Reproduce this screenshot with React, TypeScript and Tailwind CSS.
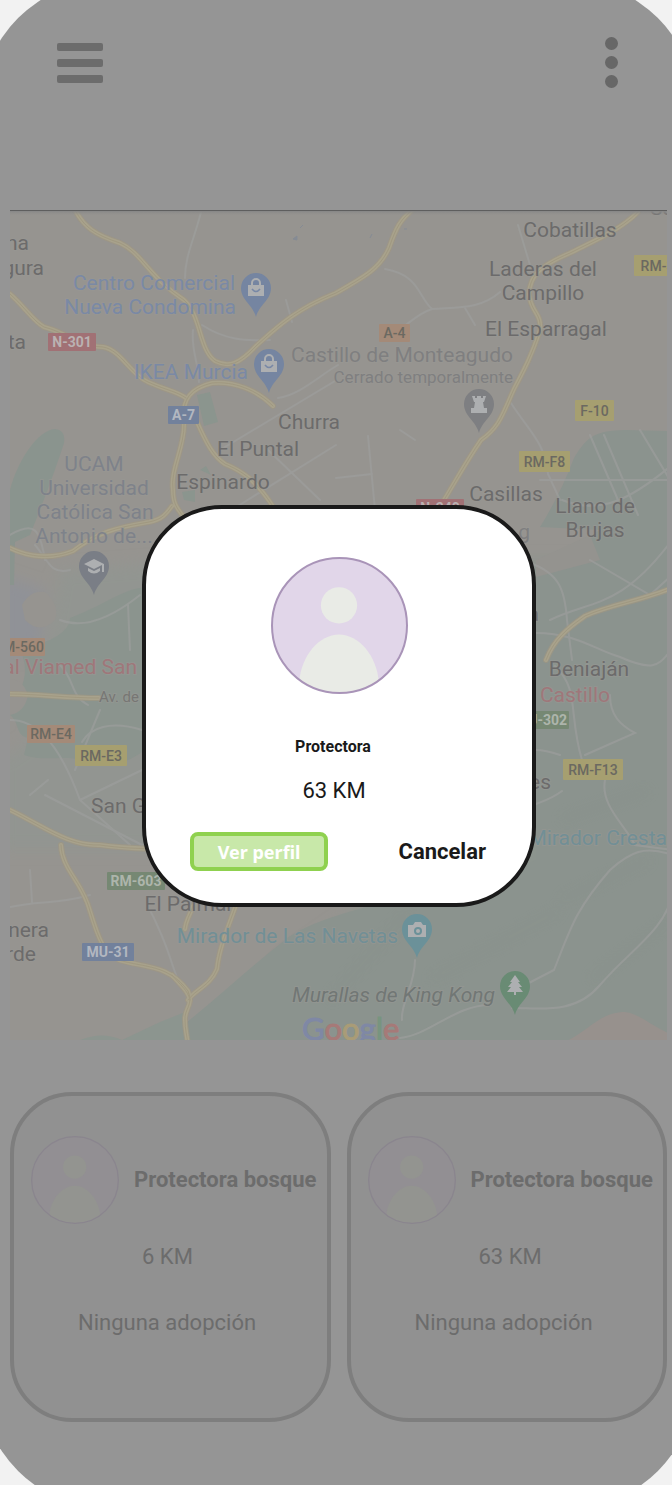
import React from "react";

type Label = { x: number; y: number; t: string; fill?: string; size?: number; italic?: boolean; end?: boolean; start?: boolean };

const DARK = "#6c6b6b";
const GREY = "#7f7f80";
const BLUE = "#7a89a5";
const SLATE = "#7e828a";
const TEAL = "#718f96";
const ROSE = "#9f777a";

const labels: Label[] = [
  { x: 570, y: 237, t: "Cobatillas" },
  { x: 543, y: 276, t: "Laderas del" },
  { x: 543, y: 300, t: "Campillo" },
  { x: 546, y: 336, t: "El Esparragal" },
  { x: 29, y: 250, t: "na", end: true },
  { x: 44, y: 275, t: "gura", end: true },
  { x: 26, y: 349, t: "ta", end: true },
  { x: 235, y: 290, t: "Centro Comercial", fill: BLUE, end: true },
  { x: 236, y: 314, t: "Nueva Condomina", fill: BLUE, end: true },
  { x: 248, y: 379, t: "IKEA Murcia", fill: BLUE, end: true },
  { x: 513, y: 362, t: "Castillo de Monteagudo", fill: GREY, end: true },
  { x: 513, y: 383, t: "Cerrado temporalmente", fill: GREY, size: 17, end: true },
  { x: 309, y: 429, t: "Churra" },
  { x: 258, y: 456, t: "El Puntal" },
  { x: 223, y: 489, t: "Espinardo" },
  { x: 94, y: 471, t: "UCAM", fill: SLATE },
  { x: 94, y: 495, t: "Universidad", fill: SLATE },
  { x: 95, y: 519, t: "Católica San", fill: SLATE },
  { x: 94, y: 543, t: "Antonio de...", fill: SLATE },
  { x: 506, y: 501, t: "Casillas" },
  { x: 595, y: 513, t: "Llano de" },
  { x: 595, y: 537, t: "Brujas" },
  { x: 530, y: 539, t: "g", fill: GREY, end: true },
  { x: 539, y: 621, t: "a", end: true },
  { x: 137, y: 674, t: "al Viamed San", fill: ROSE, end: true },
  { x: 99, y: 702, t: "Av. de", fill: "#777674", size: 15, start: true },
  { x: 589, y: 676, t: "Beniaján" },
  { x: 575, y: 702, t: "Castillo", fill: ROSE },
  { x: 551, y: 789, t: "es", end: true },
  { x: 91, y: 813, t: "San G", start: true },
  { x: 667, y: 845, t: "Mirador Cresta", fill: TEAL, end: true },
  { x: 189, y: 911, t: "El Palmar" },
  { x: 49, y: 937, t: "nera", end: true },
  { x: 36, y: 961, t: "rde", end: true },
  { x: 398, y: 943, t: "Mirador de Las Navetas", fill: TEAL, end: true },
  { x: 495, y: 1002, t: "Murallas de King Kong", fill: "#717775", italic: true, end: true },
  { x: 674, y: 215, t: "Sa", end: true },
];

type Shield = { x: number; y: number; w: number; t: string; bg: string; fg?: string; h?: number; stroke?: string };
const YELLOW = "#a69f70";
const ORANGE = "#a48a78";

const shields: Shield[] = [
  { x: 48, y: 333, w: 48, t: "N-301", bg: "#a17175", fg: "#bab2b2" },
  { x: 379, y: 324, w: 31, t: "A-4", bg: ORANGE },
  { x: 634, y: 255, w: 47, h: 21, t: "RM-3", bg: YELLOW },
  { x: 168, y: 406, w: 31, t: "A-7", bg: "#72819c", fg: "#b2b7c0" },
  { x: 575, y: 400, w: 39, h: 21, t: "F-10", bg: YELLOW },
  { x: 519, y: 451, w: 51, h: 21, t: "RM-F8", bg: YELLOW },
  { x: 416, y: 499, w: 48, t: "N-340", bg: "#a17175", fg: "#bab2b2" },
  { x: 2, y: 638, w: 43, t: "M-560", bg: ORANGE },
  { x: 27, y: 725, w: 48, t: "RM-E4", bg: ORANGE },
  { x: 75, y: 745, w: 52, h: 21, t: "RM-E3", bg: YELLOW },
  { x: 514, y: 711, w: 55, t: "MU-302", bg: "#768873", fg: "#adb5ab" },
  { x: 563, y: 759, w: 60, h: 21, t: "RM-F13", bg: YELLOW },
  { x: 107, y: 872, w: 58, t: "RM-603", bg: "#768873", fg: "#adb5ab" },
  { x: 82, y: 943, w: 52, t: "MU-31", bg: "#72819c", fg: "#b2b7c0" },
];

const highways = [
  "M74 208 C84 228 96 235 120 243 C142 253 148 276 184 300 C201 315 199 350 215 361 C229 368 239 364 256 346 C277 327 296 309 336 293 C366 276 380 268 389 248 C396 228 400 219 415 208",
  "M638 212 C620 230 596 240 570 253 C540 266 530 275 529 294 C531 313 542 313 540 330 C532 355 524 370 514 389 C503 413 500 427 481 440 C466 462 455 482 444 500",
  "M10 294 C24 306 33 321 44 327 C62 331 82 347 103 347 C121 350 130 374 148 382 C168 391 176 391 186 398",
  "M273 406 C257 390 234 381 212 383 C192 388 181 398 184 423 C185 446 170 470 173 490 C173 504 177 508 183 516",
  "M10 548 C30 558 53 559 73 551 C100 530 122 527 149 522 C163 519 166 514 172 506",
  "M196 420 C204 437 211 455 225 464 C242 471 256 480 274 508",
  "M10 694 C37 694 68 698 99 698",
  "M10 810 C45 827 68 846 100 845 C128 849 140 848 180 850",
  "M61 845 C62 870 82 881 90 911 C99 940 103 951 119 960 C145 968 168 964 188 991 C194 1005 184 1009 185 1020 C185 1030 187 1035 188 1045",
  "M236 905 C227 930 219 949 217 969 C210 986 196 989 188 1000",
  "M193 906 C190 915 186 920 185 929 M172 975 C180 985 188 990 190 1000",
  "M546 660 C554 639 568 628 585 616 C612 604 637 602 672 588",
];

const streets = [
  "M201 212 C194 240 185 256 185 278 M193 330 C191 350 198 360 199 382",
  "M202 325 C225 340 245 341 270 340 M286 300 L292 322",
  "M385 269 C420 275 418 297 432 309 C455 307 480 310 500 292",
  "M432 309 C413 315 405 330 388 335",
  "M518 225 L530 265 M465 308 L475 325",
  "M278 398 C300 395 320 375 338 365",
  "M220 450 L335 381 M238 506 L336 445 M268 450 L320 500",
  "M368 436 L375 510 M336 478 L372 474 M400 430 L415 440",
  "M511 403 C528 430 545 442 548 474 L560 500",
  "M590 435 L618 500 M604 435 L638 515 M640 430 L670 480 M540 480 L672 480",
  "M562 500 C600 515 630 500 672 465 M550 620 C590 600 620 610 672 540",
  "M520 560 C560 570 565 590 567 620 L572 660 M590 560 L650 595 L672 575",
  "M536 633 C576 633 595 650 620 657 C660 675 660 660 672 650",
  "M555 666 C580 690 568 713 582 760 M610 695 C610 715 620 725 635 733 L585 755",
  "M605 780 C600 805 625 825 635 845 L672 850",
  "M560 755 C545 750 540 750 536 750 M562 791 C550 800 540 802 536 804",
  "M672 855 C645 845 630 852 610 870 C575 910 570 930 554 970 L525 985",
  "M672 895 C665 930 630 950 600 985 C575 1015 540 1008 512 1008",
  "M490 1005 C455 1005 430 1035 400 1038 M415 960 C415 985 400 1005 402 1020",
  "M10 535 C35 520 40 530 45 560 M35 545 C48 560 50 575 70 570",
  "M60 620 C85 630 115 615 140 595 M128 605 L130 650",
  "M60 665 C75 680 70 695 88 705 M100 710 L75 770",
  "M10 720 C35 720 58 740 80 800 L130 845 M80 800 L142 770 M142 730 C110 720 90 728 82 742",
  "M30 795 L48 780 M45 795 L142 845",
  "M30 870 L32 902 M10 907 C40 900 55 905 90 895 M150 910 C170 950 168 955 178 980",
];

function Pin({ x, y, color, children }: { x: number; y: number; color: string; children: React.ReactNode }) {
  return (
    <g transform={`translate(${x} ${y})`}>
      <path d="M0 29 C-3 17 -15 12 -15 0 A15 15 0 1 1 15 0 C15 12 3 17 0 29Z" fill={color} />
      <g fill="#adafb1">{children}</g>
    </g>
  );
}

function Bag() {
  return (
    <>
      <path d="M-8 -3H8V8H-8Z" />
      <path d="M-4 -3V-5A4 4 0 0 1 4 -5V-3" fill="none" stroke="#adafb1" strokeWidth="2" />
      <path d="M-4 1Q0 6 4 1" fill="none" stroke="#7888a6" strokeWidth="1.6" />
    </>
  );
}

function MurciaMap() {
  return (
    <svg viewBox="10 211 657 829" className="block h-auto w-full" role="img" aria-label="Mapa de Murcia" fontFamily="Roboto, 'Liberation Sans', sans-serif">
      <defs>
        <filter id="soft" x="-5%" y="-5%" width="110%" height="110%">
          <feGaussianBlur stdDeviation="7" />
        </filter>
        <linearGradient id="edge" x1="0" y1="0" x2="0" y2="1">
          <stop offset="0" stopColor="#868686" />
          <stop offset="1" stopColor="#969490" stopOpacity="0" />
        </linearGradient>
      </defs>
      <rect x="0" y="200" width="680" height="850" fill="#969490" />
      <g filter="url(#soft)">
        <path d="M60 570L200 560V850H0V760L30 740Z" fill="#929591" />
        <path d="M0 575L45 590L40 650L0 660Z" fill="#909297" />
        <path d="M210 1040L285 960L400 880H680V1050H200Z" fill="#8d958f" />
        <path d="M500 560H680V900H480Z" fill="#8c948e" />
      </g>
      <path d="M10 490C18 460 38 430 55 429Q66 430 64 443C52 480 40 510 30 535L15 542L14 585H10Z" fill="#8a948e" />
      <path d="M197 395L210 392L218 422L204 426ZM182 492L195 490V502L184 500ZM200 470L206 466L211 475Z" fill="#8b958e" />
      <path d="M574 458C588 435 596 431 625 430L672 431V1042H160C200 1015 240 975 285 940C330 905 450 895 536 860V575Q557 550 574 555Q590 535 600 530L540 527Q560 495 574 458Z" fill="#8b938e" />
      <path d="M70 618C105 605 120 590 145 587V750C125 765 105 770 85 760C60 755 45 762 24 755L28 738C15 735 20 723 10 715V690H20Q30 670 20 650L50 640Q70 630 70 618Z" fill="#8b948e" />
      <path d="M22 605Q30 590 45 592Q60 605 55 620Q40 635 25 620ZM10 680Q22 678 28 695Q25 712 10 715Z" fill="#969490" />
      <path d="M536 560L590 535L600 560L555 572L536 577Z" fill="#94938f" />
      <path d="M565 1042C590 1030 600 1012 625 1012C640 1014 650 1025 670 1034V1042Z" fill="#97918d" />
      <path d="M76 1042Q100 1030 122 1040L160 1022L185 1012V1042Z" fill="#8c958f" />
      <g fill="none" stroke="#848d87" strokeWidth="4" opacity=".35" filter="url(#soft)">
        <path d="M330 1000L410 910M560 900L650 860M430 980L560 910M590 980L670 920M560 820L650 790" />
      </g>
      <g fill="none" stroke="#9e9f9e" strokeWidth="2" opacity=".65" strokeLinecap="round">
        {streets.map((d) => <path key={d} d={d} />)}
      </g>
      <g fill="none" stroke="#a09782" strokeWidth="6" strokeLinecap="round" opacity=".7">
        {highways.map((d) => <path key={d} d={d} />)}
      </g>
      <g fill="none" stroke="#a8a28c" strokeWidth="4" strokeLinecap="round">
        {highways.map((d) => <path key={d} d={d} />)}
      </g>
      <g fill="none" stroke="#a09880" strokeWidth="1" strokeLinecap="round">
        {highways.map((d) => <path key={d} d={d} />)}
      </g>
      <path d="M293 239l4 -3v4zM300 228l3 -3M370 238l2 -4M404 229l3 0" stroke="#858b94" fill="#858b94" />

      {shields.map((s) => (
        <g key={s.t}>
          <rect x={s.x} y={s.y} width={s.w} height={s.h ?? 18} rx="1" fill={s.bg} />
          <text x={s.x + s.w / 2} y={s.y + (s.h ?? 18) / 2 + 5} fontSize="14" fontWeight={s.fg ? 700 : 500} textAnchor="middle" fill={s.fg ?? "#6b6961"}>{s.t}</text>
        </g>
      ))}

      {labels.map((l) => (
        <text
          key={l.t + l.x + l.y}
          x={l.x}
          y={l.y}
          fontSize={l.size ?? 21}
          fontStyle={l.italic ? "italic" : "normal"}
          textAnchor={l.end ? "end" : l.start ? "start" : "middle"}
          fill={l.fill ?? DARK}
          stroke="#999894"
          strokeWidth="2"
          strokeOpacity=".5"
          paintOrder="stroke"
        >
          {l.t}
        </text>
      ))}

      <Pin x={256} y={288} color="#7585a1"><Bag /></Pin>
      <Pin x={269} y={364} color="#7585a1"><Bag /></Pin>
      <Pin x={479} y={404} color="#7e7f82">
        <path d="M-7 -8H-4V-6H-2V-8H2V-6H4V-8H7L5 -2H4L5 4H8V9H-8V4H-5L-4 -2H-5Z" />
      </Pin>
      <Pin x={94} y={566} color="#7a7e86">
        <path d="M-10 -2L0 -7L10 -2V6H8V-1L0 3Z" />
        <path d="M-6 2L0 5L6 2V5Q0 10 -6 5Z" />
      </Pin>
      <Pin x={417} y={929} color="#6b9199">
        <path fillRule="evenodd" d="M-9 -4H-4L-2 -7H4L6 -4H9V8H-9ZM1 -2A4 4 0 1 0 1 6A4 4 0 1 0 1 -2Z" />
        <circle cx="1" cy="2" r="2" />
      </Pin>
      <Pin x={515} y={986} color="#698b74">
        <path d="M0 -11L5 -4H3L7 1H4L8 6H1V9H-1V6H-8L-4 1H-7L-3 -4H-5Z" />
      </Pin>

      <text x="302" y="1040" fontSize="31" fontFamily="Lato, sans-serif" strokeWidth="1">
        <tspan fill="#7f88a5" stroke="#7f88a5">G</tspan>
        <tspan fill="#a67a78" stroke="#a67a78">o</tspan>
        <tspan fill="#a99c77" stroke="#a99c77">o</tspan>
        <tspan fill="#7f88a5" stroke="#7f88a5">g</tspan>
        <tspan fill="#789580" stroke="#789580">l</tspan>
        <tspan fill="#a67a78" stroke="#a67a78">e</tspan>
      </text>
      <rect x="10" y="211" width="657" height="5" fill="url(#edge)" />
    </svg>
  );
}

function Avatar({ className, dim = false }: { className: string; dim?: boolean }) {
  const id = React.useId();
  const [bg, line, body] = dim ? ["#928f93", "#8a858e", "#939490"] : ["#e1d6e9", "#a994b8", "#e9ebe6"];
  return (
    <svg viewBox="0 0 136 136" className={className} aria-hidden="true">
      <clipPath id={id}>
        <circle cx="68" cy="68" r="67" />
      </clipPath>
      <circle cx="68" cy="68" r="67" fill={bg} />
      <g clipPath={`url(#${id})`} fill={body}>
        <circle cx="67.500" cy="48" r="18" />
        <path d="M28 124C30 98 48 77 67.500 77S105 98 107 124L100 140H35Z" />
      </g>
      <circle cx="68" cy="68" r="67" fill="none" stroke={line} strokeWidth="2" />
    </svg>
  );
}

function ShelterCard({ name, distance }: { name: string; distance: string }) {
  return (
    <article className="flex h-[330px] min-w-0 flex-1 flex-col rounded-[62px] border-4 border-[#7e7e7e] bg-[#919191] pt-10 text-[22px] leading-[26px] text-[#6c6c6c]">
      <div className="flex items-center gap-[15px] pl-[17px]">
        <Avatar className="size-[88px] shrink-0" dim />
        <h2 className="whitespace-nowrap font-bold">{name}</h2>
      </div>
      <p className="mt-5 pl-32">{distance}</p>
      <p className="mt-10 pl-16">Ninguna adopción</p>
    </article>
  );
}

export default function App() {
  return (
    <div className="relative flex flex-col overflow-hidden bg-[#f2f2f2] font-[Roboto,'Liberation_Sans',sans-serif]">
      <div className="-mt-5 -mr-6 -mb-6 -ml-5 rounded-[130px] bg-[#959595] pt-5 pr-6 pb-6 pl-5">
        <header className="flex h-[210px] items-start justify-between pt-[37px] pr-[54px] pl-[57px]">
          <button type="button" aria-label="Menú" className="mt-1.5 flex flex-col gap-2">
            <span className="h-2 w-[46px] rounded-xs bg-[#6c6c6c]" />
            <span className="h-2 w-[46px] rounded-xs bg-[#6c6c6c]" />
            <span className="h-2 w-[46px] rounded-xs bg-[#6c6c6c]" />
          </button>
          <button type="button" aria-label="Más opciones" className="flex flex-col gap-1.5">
            <span className="size-[13px] rounded-full bg-[#676767]" />
            <span className="size-[13px] rounded-full bg-[#676767]" />
            <span className="size-[13px] rounded-full bg-[#676767]" />
          </button>
        </header>
        <main className="pr-[5px] pl-2.5">
          <div className="border-t border-[#5e5e5e]">
            <MurciaMap />
          </div>
          <section className="flex gap-4 pt-[52px] pb-[63px]" aria-label="Protectoras cercanas">
            <ShelterCard name="Protectora bosque" distance="6 KM" />
            <ShelterCard name="Protectora bosque" distance="63 KM" />
          </section>
        </main>
      </div>

      <div className="absolute inset-0 flex items-start justify-center pt-[505px] pl-1.5">
        <div role="dialog" aria-modal="true" aria-labelledby="shelter-name" className="flex w-[394px] flex-col items-center rounded-[80px] border-4 border-[#1a1a1a] bg-white pt-12 pb-8 text-[#1a1a1a]">
          <Avatar className="size-[137px]" />
          <h1 id="shelter-name" className="mt-[43px] mr-3 text-base leading-5 font-bold">Protectora</h1>
          <p className="mt-[21px] mr-2.5 text-[22px] leading-[26px]">63 KM</p>
          <div className="mt-7 flex w-full items-center justify-between pr-[46px] pl-11">
            <button type="button" className="h-[39px] w-[138px] rounded-lg border-4 border-[#8fd14f] bg-[#c8e8a9] font-['Noto_Sans','Open_Sans',sans-serif] text-lg leading-none font-bold text-white">
              Ver perfil
            </button>
            <button type="button" className="text-[22px] leading-[26px] font-bold">Cancelar</button>
          </div>
        </div>
      </div>
    </div>
  );
}
